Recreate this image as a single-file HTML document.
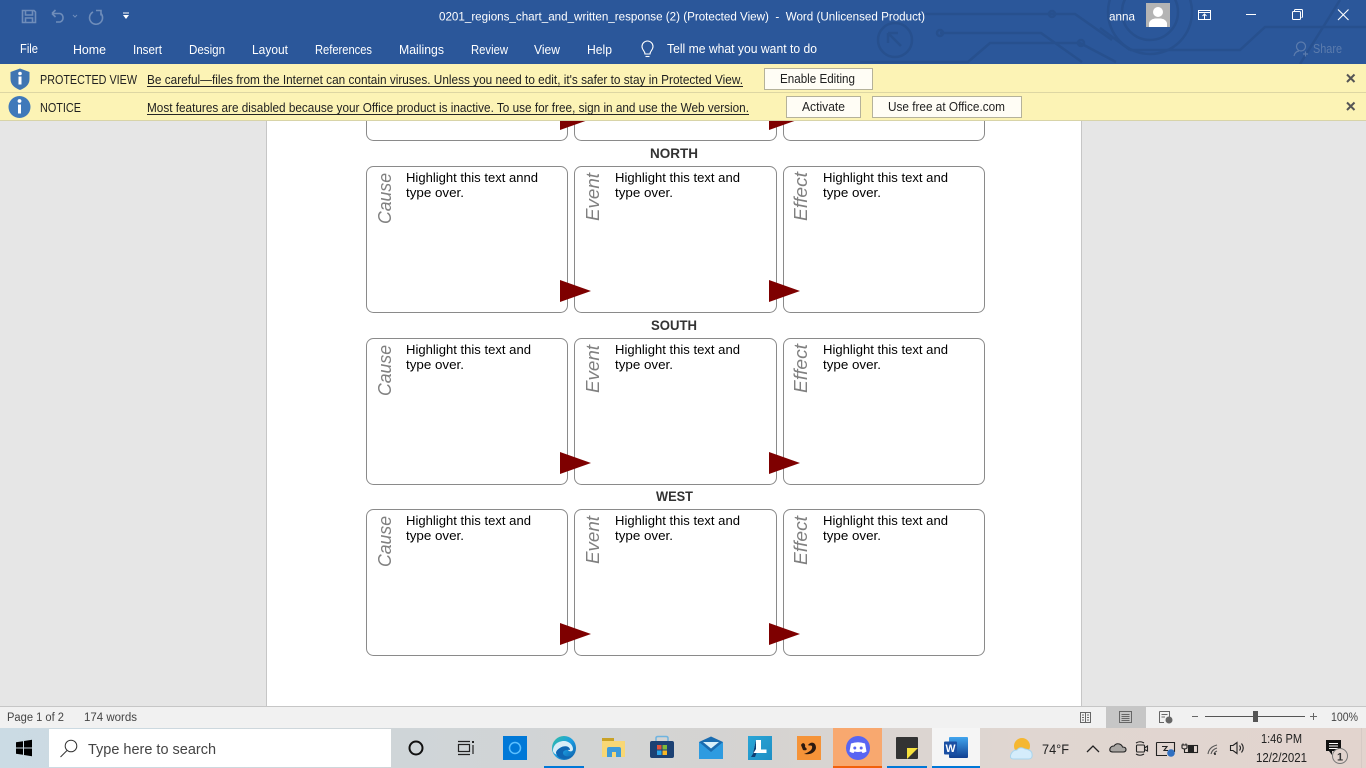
<!DOCTYPE html>
<html lang="en"><head><meta charset="utf-8"><title>Word</title>
<style>
html,body{margin:0;padding:0;width:1366px;height:768px;overflow:hidden;background:#e6e6e6}
svg{display:block;position:absolute;left:0;top:0}
text{font-family:"Liberation Sans",Arial,sans-serif;white-space:pre}
.w{fill:#fff;font-size:13px}
.b{fill:#1f1f1f;font-size:13px}
.d{fill:#000;font-size:13px}
.s{fill:#444;font-size:11.5px}
.r{fill:#808080;font-size:18px;font-style:italic}
.h{fill:#333;font-size:13.5px;font-weight:bold}
.c{fill:none;stroke:#8a8a8a;stroke-width:1}
.t{fill:#7e0000}
.l{fill:none;stroke:#27508e;stroke-width:2.5}
.k{fill:#222;font-size:12.5px}
</style></head><body>
<svg width="1366" height="768" viewBox="0 0 1366 768" xmlns="http://www.w3.org/2000/svg">
<defs>
<linearGradient id="tb" x1="0" x2="1" y1="0" y2="0"><stop offset="0" stop-color="#cbdbe4"/><stop offset=".3" stop-color="#cfd5d8"/><stop offset=".55" stop-color="#d5d3d1"/><stop offset=".75" stop-color="#e0d6d1"/><stop offset="1" stop-color="#e2d4ce"/></linearGradient>
<linearGradient id="ed" x1="0" x2="1" y1="0" y2="1"><stop offset="0" stop-color="#35c1a0"/><stop offset=".5" stop-color="#1b9de2"/><stop offset="1" stop-color="#0c59a4"/></linearGradient>
<linearGradient id="wd" x1="0" x2="0" y1="0" y2="1"><stop offset="0" stop-color="#41a5ee"/><stop offset="1" stop-color="#103f91"/></linearGradient>
<linearGradient id="ll" x1="0" x2="1" y1="0" y2="1"><stop offset="0" stop-color="#2aa5d6"/><stop offset="1" stop-color="#1f8fc4"/></linearGradient>
</defs>

<!-- document area -->
<rect x="0" y="120" width="1366" height="587" fill="#e6e6e6"/>
<rect x="267" y="120" width="814" height="587" fill="#fff"/>
<path d="M266.5 120V706M1081.5 120V706" stroke="#c6c6c6" fill="none"/>

<!-- top partial row -->
<path class="c" d="M366.5 110V133.500a7 7 0 0 0 7 7H560.500a7 7 0 0 0 7-7V110"/>
<path class="c" d="M574.500 110V133.500a7 7 0 0 0 7 7H769.500a7 7 0 0 0 7-7V110"/>
<path class="c" d="M783.500 110V133.500a7 7 0 0 0 7 7H977.500a7 7 0 0 0 7-7V110"/>
<polygon class="t" points="560,108 591,119 560,130"/>
<polygon class="t" points="769,108 800,119 769,130"/>

<!-- NORTH -->
<text class="h" x="650" y="158" textLength="48" lengthAdjust="spacingAndGlyphs">NORTH</text>
<rect class="c" x="366.500" y="166.500" width="201" height="146" rx="7"/>
<rect class="c" x="574.500" y="166.500" width="202" height="146" rx="7"/>
<rect class="c" x="783.500" y="166.500" width="201" height="146" rx="7"/>
<text class="r" transform="translate(391 224) rotate(-90)" textLength="51" lengthAdjust="spacingAndGlyphs">Cause</text>
<text class="r" transform="translate(599 221) rotate(-90)" textLength="48" lengthAdjust="spacingAndGlyphs">Event</text>
<text class="r" transform="translate(807 221) rotate(-90)" textLength="49" lengthAdjust="spacingAndGlyphs">Effect</text>
<text class="d" x="406" y="182" textLength="132" lengthAdjust="spacingAndGlyphs">Highlight this text annd</text>
<text class="d" x="406" y="197" textLength="58" lengthAdjust="spacingAndGlyphs">type over.</text>
<text class="d" x="615" y="182" textLength="125" lengthAdjust="spacingAndGlyphs">Highlight this text and</text>
<text class="d" x="615" y="197" textLength="58" lengthAdjust="spacingAndGlyphs">type over.</text>
<text class="d" x="823" y="182" textLength="125" lengthAdjust="spacingAndGlyphs">Highlight this text and</text>
<text class="d" x="823" y="197" textLength="58" lengthAdjust="spacingAndGlyphs">type over.</text>
<polygon class="t" points="560,280 591,291 560,302"/>
<polygon class="t" points="769,280 800,291 769,302"/>

<!-- SOUTH -->
<text class="h" x="651" y="330" textLength="46" lengthAdjust="spacingAndGlyphs">SOUTH</text>
<rect class="c" x="366.500" y="338.500" width="201" height="146" rx="7"/>
<rect class="c" x="574.500" y="338.500" width="202" height="146" rx="7"/>
<rect class="c" x="783.500" y="338.500" width="201" height="146" rx="7"/>
<text class="r" transform="translate(391 396) rotate(-90)" textLength="51" lengthAdjust="spacingAndGlyphs">Cause</text>
<text class="r" transform="translate(599 393) rotate(-90)" textLength="48" lengthAdjust="spacingAndGlyphs">Event</text>
<text class="r" transform="translate(807 393) rotate(-90)" textLength="49" lengthAdjust="spacingAndGlyphs">Effect</text>
<text class="d" x="406" y="354" textLength="125" lengthAdjust="spacingAndGlyphs">Highlight this text and</text>
<text class="d" x="406" y="369" textLength="58" lengthAdjust="spacingAndGlyphs">type over.</text>
<text class="d" x="615" y="354" textLength="125" lengthAdjust="spacingAndGlyphs">Highlight this text and</text>
<text class="d" x="615" y="369" textLength="58" lengthAdjust="spacingAndGlyphs">type over.</text>
<text class="d" x="823" y="354" textLength="125" lengthAdjust="spacingAndGlyphs">Highlight this text and</text>
<text class="d" x="823" y="369" textLength="58" lengthAdjust="spacingAndGlyphs">type over.</text>
<polygon class="t" points="560,452 591,463 560,474"/>
<polygon class="t" points="769,452 800,463 769,474"/>

<!-- WEST -->
<text class="h" x="656" y="501" textLength="37" lengthAdjust="spacingAndGlyphs">WEST</text>
<rect class="c" x="366.500" y="509.500" width="201" height="146" rx="7"/>
<rect class="c" x="574.500" y="509.500" width="202" height="146" rx="7"/>
<rect class="c" x="783.500" y="509.500" width="201" height="146" rx="7"/>
<text class="r" transform="translate(391 567) rotate(-90)" textLength="51" lengthAdjust="spacingAndGlyphs">Cause</text>
<text class="r" transform="translate(599 564) rotate(-90)" textLength="48" lengthAdjust="spacingAndGlyphs">Event</text>
<text class="r" transform="translate(807 565) rotate(-90)" textLength="49" lengthAdjust="spacingAndGlyphs">Effect</text>
<text class="d" x="406" y="525" textLength="125" lengthAdjust="spacingAndGlyphs">Highlight this text and</text>
<text class="d" x="406" y="540" textLength="58" lengthAdjust="spacingAndGlyphs">type over.</text>
<text class="d" x="615" y="525" textLength="125" lengthAdjust="spacingAndGlyphs">Highlight this text and</text>
<text class="d" x="615" y="540" textLength="58" lengthAdjust="spacingAndGlyphs">type over.</text>
<text class="d" x="823" y="525" textLength="125" lengthAdjust="spacingAndGlyphs">Highlight this text and</text>
<text class="d" x="823" y="540" textLength="58" lengthAdjust="spacingAndGlyphs">type over.</text>
<polygon class="t" points="560,623 591,634 560,645"/>
<polygon class="t" points="769,623 800,634 769,645"/>

<!-- title bar + ribbon -->
<rect x="0" y="0" width="1366" height="64" fill="#2b579a"/>
<path class="l" d="M925 14H1075L1112 40M940 33H1041L1082 62M860 62H968L990 43H1080L1116 62M1130 50H1240L1265 27H1366M1100 28L1130 50M1300 64L1340 0"/>
<circle class="l" cx="940" cy="33" r="3"/><circle class="l" cx="1052" cy="14" r="3"/><circle class="l" cx="1081" cy="43" r="3"/>
<circle class="l" cx="895" cy="40" r="17"/>
<path class="l" d="M888 33L901 46M888 33H898M888 33V43"/>
<circle class="l" cx="1150" cy="12" r="42" stroke-width="3"/><circle class="l" cx="1150" cy="12" r="28"/>

<!-- quick access -->
<g fill="none" stroke="#6f8dba" stroke-width="1.600">
<path d="M23 10.500H34L35.500 12V22.500H22.500V10.500Z"/><path d="M25.500 11V15H32.500V11M25.500 22V18H32.500V22"/>
<path d="M52 13.500H60A4.500 4.500 0 0 1 60 22H56M52 13.500L55.500 10M52 13.500L55.500 17"/>
<path d="M73 15l2 2 2-2" stroke-width="1"/>
<path d="M93 12A6.500 6.500 0 1 0 100.500 13M96 10.500H101V15.500"/>
</g>
<path d="M123 13H129" stroke="#fff" stroke-width="1"/><path d="M123 15H129L126 19Z" fill="#fff"/>

<text class="w" x="439" y="20.500" style="font-size:12.300px" textLength="486" lengthAdjust="spacingAndGlyphs">0201_regions_chart_and_written_response (2) (Protected View)  -  Word (Unlicensed Product)</text>
<text class="w" x="1109" y="20.500" style="font-size:12.300px" textLength="26" lengthAdjust="spacingAndGlyphs">anna</text>
<rect x="1146" y="3" width="24" height="24" fill="#b4b4b4"/>
<circle cx="1158" cy="12" r="5" fill="#fff"/><path d="M1149 27V23Q1150 19.500 1155 18.500H1161Q1166 19.500 1167 23V27Z" fill="#fff"/>
<g fill="none" stroke="#fff" stroke-width="1">
<rect x="1198.500" y="10.500" width="12" height="9"/><path d="M1198.500 12.500H1210.500"/><path d="M1204.500 19V14M1202.500 16L1204.500 14L1206.500 16"/>
<path d="M1246 14.500H1256"/>
<rect x="1292.500" y="11.500" width="8" height="8" rx="1"/><path d="M1294.500 11.500V10.500Q1294.500 9.500 1295.500 9.500H1301.500Q1302.500 9.500 1302.500 10.500V16.500Q1302.500 17.500 1301.500 17.500"/>
<path d="M1338 9.500L1348.500 20M1348.500 9.500L1338 20" stroke-width="1.100"/>
</g>

<text class="w" x="20" y="53" textLength="18" lengthAdjust="spacingAndGlyphs">File</text>
<text class="w" x="73" y="54" textLength="33" lengthAdjust="spacingAndGlyphs">Home</text>
<text class="w" x="133" y="54" textLength="29" lengthAdjust="spacingAndGlyphs">Insert</text>
<text class="w" x="189" y="54" textLength="36" lengthAdjust="spacingAndGlyphs">Design</text>
<text class="w" x="252" y="54" textLength="36" lengthAdjust="spacingAndGlyphs">Layout</text>
<text class="w" x="315" y="54" textLength="57" lengthAdjust="spacingAndGlyphs">References</text>
<text class="w" x="399" y="54" textLength="45" lengthAdjust="spacingAndGlyphs">Mailings</text>
<text class="w" x="471" y="54" textLength="37" lengthAdjust="spacingAndGlyphs">Review</text>
<text class="w" x="534" y="54" textLength="26" lengthAdjust="spacingAndGlyphs">View</text>
<text class="w" x="587" y="54" textLength="25" lengthAdjust="spacingAndGlyphs">Help</text>
<g fill="none" stroke="#fff" stroke-width="1.100"><path d="M645 54C645 51 642 50 642 46.500A5.500 5.500 0 1 1 653 46.500C653 50 650 51 650 54Z"/><path d="M645.500 56.500H649.500"/></g>
<text class="w" x="667" y="53" textLength="150" lengthAdjust="spacingAndGlyphs">Tell me what you want to do</text>
<g fill="none" stroke="#5c7cad" stroke-width="1.200"><circle cx="1301" cy="46.500" r="4.500"/><path d="M1294 56Q1295 51.500 1299 51M1303 54H1308M1305.500 51.500V56.500"/></g>
<text class="w" x="1313" y="53" style="fill:#5c7cad;font-size:12.500px" textLength="29" lengthAdjust="spacingAndGlyphs">Share</text>

<!-- banners -->
<rect x="0" y="64" width="1366" height="57" fill="#fcf3b5"/>
<rect x="0" y="92" width="1366" height="1" fill="#ddd6a3"/>
<rect x="0" y="120" width="1366" height="1" fill="#d8d4a8"/>
<path d="M20 68.500L29.500 72V79C29.500 85 25 88 20 90C15 88 10.500 85 10.500 79V72Z" fill="#3f75b2"/>
<rect x="18.500" y="76.500" width="3" height="8" fill="#fff"/><circle cx="20" cy="73.500" r="1.800" fill="#fff"/>
<circle cx="19.500" cy="107" r="11" fill="#3f79ba"/>
<rect x="18" y="104.500" width="3" height="9" fill="#fff"/><circle cx="19.500" cy="101" r="1.900" fill="#fff"/>
<text class="b" x="40" y="84" textLength="97" lengthAdjust="spacingAndGlyphs">PROTECTED VIEW</text>
<text class="b" x="147" y="84" textLength="596" lengthAdjust="spacingAndGlyphs">Be careful—files from the Internet can contain viruses. Unless you need to edit, it's safer to stay in Protected View.</text>
<path d="M147 86.500H743" stroke="#262626"/>
<text class="b" x="40" y="112" textLength="41" lengthAdjust="spacingAndGlyphs">NOTICE</text>
<text class="b" x="147" y="112" textLength="602" lengthAdjust="spacingAndGlyphs">Most features are disabled because your Office product is inactive. To use for free, sign in and use the Web version.</text>
<path d="M147 114.500H749" stroke="#262626"/>
<g fill="#fffdf5" stroke="#b5b29a"><rect x="764.500" y="68.500" width="108" height="21"/><rect x="786.500" y="96.500" width="74" height="21"/><rect x="872.500" y="96.500" width="149" height="21"/></g>
<text class="b" x="780" y="83" textLength="75" lengthAdjust="spacingAndGlyphs">Enable Editing</text>
<text class="b" x="802" y="111" textLength="43" lengthAdjust="spacingAndGlyphs">Activate</text>
<text class="b" x="888" y="111" textLength="117" lengthAdjust="spacingAndGlyphs">Use free at Office.com</text>
<path d="M1347 74.500L1354.500 82M1354.500 74.500L1347 82M1347 102.500L1354.500 110M1354.500 102.500L1347 110" stroke="#555" stroke-width="2" fill="none"/>

<!-- status bar -->
<rect x="0" y="706" width="1366" height="22" fill="#f1f1f1"/>
<rect x="0" y="706" width="1366" height="1" fill="#c6c6c6"/>
<text class="s" x="7" y="721" textLength="57" lengthAdjust="spacingAndGlyphs">Page 1 of 2</text>
<text class="s" x="84" y="721" textLength="53" lengthAdjust="spacingAndGlyphs">174 words</text>
<rect x="1106" y="707" width="40" height="21" fill="#c6c6c6"/>
<g fill="none" stroke="#666" stroke-width="1">
<path d="M1080.500 712.500H1090.500V722.500H1080.500ZM1085.500 712.500V722.500M1082 715H1084M1082 717.500H1084M1082 720H1084M1087 715H1089M1087 717.500H1089M1087 720H1089"/>
<path d="M1119.500 711.500H1131.500V722.500H1119.500ZM1121.500 714.500H1129.500M1121.500 716.500H1129.500M1121.500 718.500H1129.500M1121.500 720.500H1129.500"/>
<path d="M1159.500 711.500H1169.500V718M1159.500 711.500V722.500H1164M1161.500 714.500H1167.500M1161.500 717H1165"/>
<path d="M1192 716.500H1198M1310 716.500H1317M1313.500 713V720"/>
</g>
<circle cx="1169" cy="720" r="3.500" fill="#666"/>
<rect x="1205" y="716" width="100" height="1" fill="#555"/>
<rect x="1253" y="711" width="5" height="11" fill="#555"/>
<text class="s" x="1331" y="721" textLength="27" lengthAdjust="spacingAndGlyphs">100%</text>

<!-- taskbar -->
<rect x="0" y="728" width="1366" height="40" fill="url(#tb)"/>
<g fill="#000"><path d="M16 742.300L23 741.200V747.500H16ZM24 741L32 739.800V747.500H24ZM16 748.500H23V754.800L16 753.700ZM24 748.500H32V756.200L24 755Z"/></g>
<rect x="49" y="729" width="342" height="38" fill="#fff"/>
<g fill="none" stroke="#333" stroke-width="1"><circle cx="71" cy="746" r="5.800"/><path d="M67 750.500L60.500 757"/></g>
<text x="88" y="754" style="font-size:15px;fill:#444" textLength="128" lengthAdjust="spacingAndGlyphs">Type here to search</text>
<circle cx="416" cy="748" r="6.500" fill="none" stroke="#111" stroke-width="2"/>
<g fill="none" stroke="#222" stroke-width="1.200"><path d="M458 741.500H470M458 754.500H470"/><rect x="458.500" y="744.500" width="11" height="7"/><path d="M473 745V754"/></g>
<rect x="472" y="741" width="2" height="2" fill="#222"/>
<rect x="503" y="736" width="24" height="24" fill="#0078d7"/>
<circle cx="515" cy="748" r="5.500" fill="none" stroke="#5cc0ff" stroke-width="1.500"/>

<circle cx="564" cy="748" r="12" fill="url(#ed)"/>
<path d="M553 751C553 744 559 741 564 741C569 741 573 745 573 749C573 752 569 752 568 750C567 748 565 746 562 747C558 748 557 752 560 756C556 755 553 753 553 751Z" fill="#d8edf8"/>
<path d="M560 748C564 745 570 746 570 750C567 749.500 563 750 563 753C563 756 568 758 573 755C569 760 558 761 556 753C556 751 558 749 560 748Z" fill="#0f66b3"/>
<rect x="544" y="766" width="40" height="2" fill="#0078d7"/>

<path d="M602 738H612L614 741H625V757H602Z" fill="#f8d775"/>
<rect x="602" y="738" width="12" height="3" fill="#c9a227"/>
<path d="M607 757V749Q607 747 609 747H619Q621 747 621 749V757H616V753H612V757Z" fill="#3f9bd9"/>
<rect x="612" y="752" width="4" height="5" fill="#f8d775"/>

<rect x="650" y="741" width="24" height="17" rx="2" fill="#1c4173"/>
<path d="M656 741V738Q656 736.500 658 736.500H666Q668 736.500 668 738V741" fill="none" stroke="#6fb4e0" stroke-width="1.500"/>
<rect x="657" y="745" width="4.500" height="4.500" fill="#e2533b"/><rect x="662.500" y="745" width="4.500" height="4.500" fill="#7fba38"/><rect x="657" y="750.500" width="4.500" height="4.500" fill="#2aa5e8"/><rect x="662.500" y="750.500" width="4.500" height="4.500" fill="#f8b824"/>

<path d="M699 742L711 736.500L723 742V759H699Z" fill="#1a6cb0"/>
<path d="M699 742L711 752L723 742V759H699Z" fill="#2e9be0"/>
<path d="M703 742H719L711 748.500Z" fill="#d8f0fb"/>
<rect x="748" y="736" width="24" height="24" fill="url(#ll)"/>
<path d="M756 740H761V749.500H766.500V753H753Z" fill="#fff"/><path d="M756 740V749L751 757H755L756.500 753H753Z" fill="#0d3f74"/>

<rect x="797" y="736" width="24" height="24" fill="#f59338"/>
<path d="M801 745C803 741 806 744 805 747C808 749 807 751 803 750ZM808 745C811 741 816 742 816 748C815 753 810 755 804 754C809 752 813 750 812 746C811 745 809 746 808 745Z" fill="#2b1a10"/>

<rect x="833" y="728" width="49" height="40" fill="#f8a86f"/>
<rect x="833" y="766" width="49" height="2" fill="#f2600c"/>
<circle cx="858" cy="748" r="12" fill="#5865f2"/>
<path d="M851 743.500Q858 741 865 743.500L866.500 751.500Q864.500 753 862.500 753L861.500 751.500Q858 752.500 854.500 751.500L853.500 753Q851.500 753 849.500 751.500Z" fill="#fff"/>
<circle cx="854.800" cy="748" r="1.500" fill="#5865f2"/><circle cx="861.200" cy="748" r="1.500" fill="#5865f2"/>

<rect x="896" y="737" width="22" height="22" rx="1" fill="#333"/>
<path d="M907 748H918L907 759Z" fill="#f6e13c"/>
<rect x="887" y="766" width="40" height="2" fill="#0078d7"/>

<rect x="932" y="728" width="48" height="40" fill="#f5f5f5"/>
<rect x="932" y="766" width="48" height="2" fill="#0078d7"/>
<rect x="949" y="737" width="19" height="21" rx="1" fill="url(#wd)"/>
<rect x="944" y="741.500" width="13" height="13" rx="1" fill="#1a4fa3"/>
<text x="945.500" y="752" style="font-size:11px;font-weight:bold;fill:#fff" textLength="10" lengthAdjust="spacingAndGlyphs">W</text>

<!-- tray -->
<circle cx="1022" cy="746" r="8" fill="#f5b731"/>
<path d="M1014 759Q1009 759 1011 754Q1013 750 1017 750Q1020 746 1025 749Q1032 750 1032 754Q1033 759 1028 759Z" fill="#d4ecfb" stroke="#a9d5ee"/>
<text x="1042" y="754" style="font-size:14px;fill:#222" textLength="27" lengthAdjust="spacingAndGlyphs">74°F</text>
<g fill="none" stroke="#222" stroke-width="1.100">
<path d="M1087 752L1093 746L1099 752" stroke-width="1.300"/>
<path d="M1113 752Q1109 752 1110 748.500Q1111 746 1114 746Q1116 743 1119.500 744Q1122 745 1122.500 747Q1126 747 1126 749.500Q1126 752 1123 752Z" fill="#a9a6a3"/>
<rect x="1136.500" y="745" width="8" height="7" rx="1"/><path d="M1144.500 748L1147.500 746V751L1144.500 749.500M1136 743Q1140 740.500 1144 743M1136 754Q1140 756.500 1144 754"/>
<path d="M1156.500 742.500H1174.500V752M1156.500 742.500V755.500H1167M1162 746.500H1167L1164 750.500H1168"/>
<path d="M1183 745V743.500M1186 745V743.500M1182 745H1187V748Q1184.500 750 1182 748ZM1184.500 749.500V752.500H1188"/>
<rect x="1188.500" y="745.500" width="9" height="7"/>
<path d="M1208 754Q1209 747 1217 745M1211 754Q1212 749.500 1217 748M1214 754Q1214.500 752 1217 751" stroke="#555"/>
<path d="M1230.500 745.500H1233L1237 742.500V753.500L1233 750.500H1230.500ZM1239.500 745.500Q1241.500 748 1239.500 750.500M1241.500 743.500Q1245 748 1241.500 752.500"/>
</g>
<circle cx="1215" cy="754" r="1" fill="#222"/>
<rect x="1189" y="746" width="5" height="6" fill="#222"/>
<circle cx="1171" cy="753" r="3.800" fill="#2f6fc1"/>
<text class="k" x="1261" y="743" textLength="41" lengthAdjust="spacingAndGlyphs">1:46 PM</text>
<text class="k" x="1256" y="762" textLength="51" lengthAdjust="spacingAndGlyphs">12/2/2021</text>
<path d="M1326 740H1341V751H1332V755L1329 751H1326Z" fill="#111"/>
<path d="M1329 743.500H1338M1329 746H1338M1329 748.500H1338" stroke="#fff" stroke-width="1"/>
<circle cx="1340" cy="756" r="7.500" fill="#e2d4ce" stroke="#777"/>
<text x="1337" y="760.500" style="font-size:11px;fill:#333;font-weight:bold">1</text>
<rect x="1361" y="728" width="1" height="40" fill="#d6cac5"/>
</svg>
</body></html>
